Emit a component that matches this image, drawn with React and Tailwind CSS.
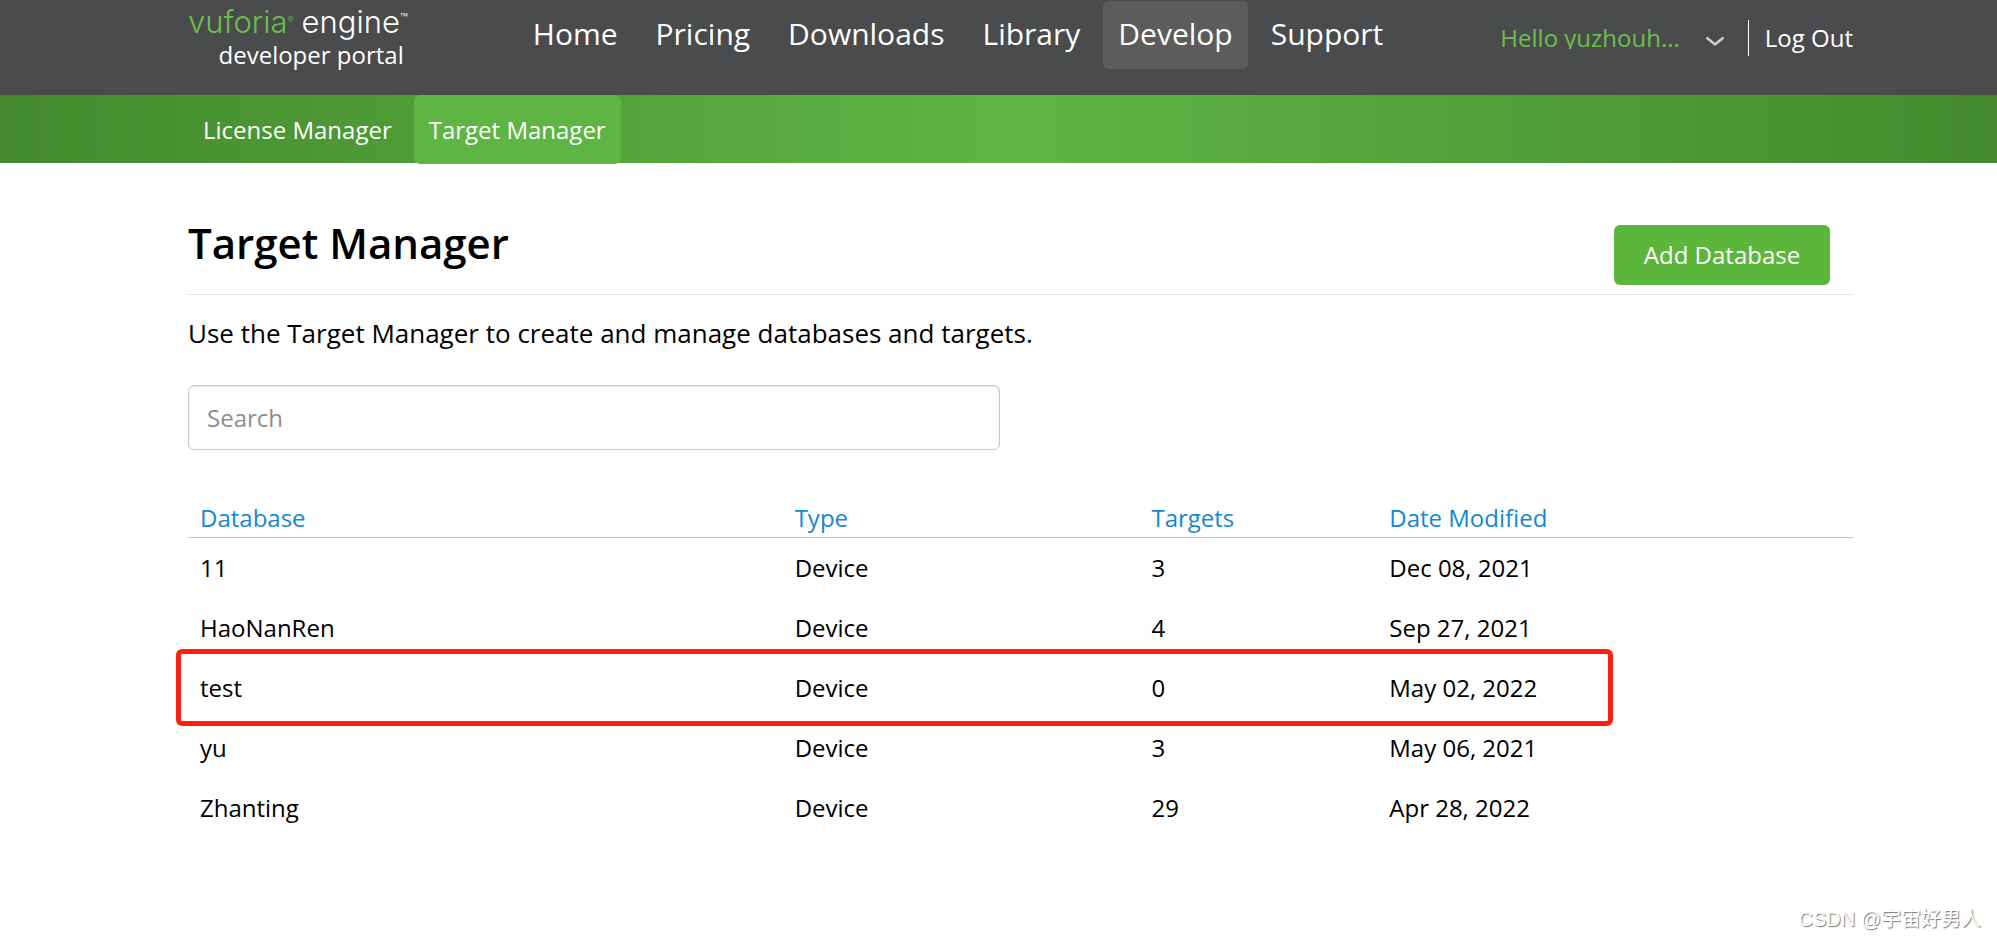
import React from "react";

const navItems = ["Home", "Pricing", "Downloads", "Library", "Develop", "Support"];

const databases = [
  { name: "11", type: "Device", targets: 3, modified: "Dec 08, 2021" },
  { name: "HaoNanRen", type: "Device", targets: 4, modified: "Sep 27, 2021" },
  { name: "test", type: "Device", targets: 0, modified: "May 02, 2022", marked: true },
  { name: "yu", type: "Device", targets: 3, modified: "May 06, 2021" },
  { name: "Zhanting", type: "Device", targets: 29, modified: "Apr 28, 2022" },
];

const Logo = () => (
  <a href="#" className="flex flex-col items-end pt-1">
    <span className="flex items-start font-['Inter',sans-serif] text-[31px] leading-9 font-light">
      <span className="text-[#6cc04a]">vuforia</span>
      <span className="text-[9px] leading-8 text-[#6cc04a]">®</span>
      <span className="ml-2">engine</span>
      <span className="text-[13px] leading-7">™</span>
    </span>
    <span className="pr-1 text-2xl leading-[30px]">developer portal</span>
  </a>
);

const Header = () => (
  <header className="h-[95px] bg-[#4a4b4d] pl-[188px] pr-36 text-white flex items-start justify-between">
    <Logo />
    <nav className="flex gap-2 pt-px pl-2 text-[30px] leading-[66px]">
      {navItems.map(item => (
        <a
          key={item}
          href="#"
          className={item === "Develop" ? "px-[15px] pb-0.5 rounded-md bg-[#5c5c5c]" : "px-[15px]"}
        >
          {item}
        </a>
      ))}
    </nav>
    <div className="flex items-start pt-5 text-2xl">
      <button type="button" className="flex items-end text-[#6cc04a] cursor-pointer">
        <span className="h-[29px] overflow-hidden leading-9">Hello yuzhouh...</span>
        <svg className="ml-[25px] mb-0.5 h-3 w-5" viewBox="0 0 20 12" fill="none" stroke="#cfcfcf" strokeWidth="2.400">
          <path d="M1.500 2.500L10 9.500L18.500 2.500" />
        </svg>
      </button>
      <a href="#" className="ml-[23px] border-l border-white pl-4 leading-9">Log Out</a>
    </div>
  </header>
);

const SubNav = () => (
  <nav className="h-[68px] pl-[188px] flex items-start gap-[7px] bg-linear-[90deg,#448a2d,#5fb544_51%,#448a2d] text-2xl leading-[69px] text-white">
    <a href="#" className="px-[15px]">License Manager</a>
    <a href="#" className="px-[15px] rounded-md bg-[#5fb544]">Target Manager</a>
  </nav>
);

const DatabaseTable = () => (
  <table className="mt-[49px] w-full table-fixed text-left text-2xl">
    <thead>
      <tr className="h-[38px] border-b border-[#c4c4c4] text-[#1489cf]">
        <th className="w-5/14 px-3 font-normal">Database</th>
        <th className="w-3/14 px-3 font-normal">Type</th>
        <th className="w-2/14 px-3 font-normal">Targets</th>
        <th className="w-4/14 px-3 font-normal">Date Modified</th>
      </tr>
    </thead>
    <tbody>
      {databases.map(db => (
        <tr key={db.name} className="relative h-15">
          <td className="px-3 pt-0.5">
            {db.name}
            {db.marked && (
              <span className="absolute -left-3 right-60 -top-2 -bottom-[9px] rounded-md border-5 border-[#ff1f10] pointer-events-none"></span>
            )}
          </td>
          <td className="px-3 pt-0.5">{db.type}</td>
          <td className="px-3 pt-0.5">{db.targets}</td>
          <td className="px-3 pt-0.5">{db.modified}</td>
        </tr>
      ))}
    </tbody>
  </table>
);

const App = () => (
  <div className="relative min-h-screen bg-white font-['Open_Sans',sans-serif] text-black">
    <Header />
    <SubNav />
    <main className="pl-[188px] pr-36 pt-[50px]">
      <div className="flex items-end justify-between border-b border-[#e3e3e3] pb-[9px] pr-[23px]">
        <h1 className="pb-3 text-[42px] leading-[60px] font-semibold">Target Manager</h1>
        <button type="button" className="h-15 w-[216px] rounded-md bg-[#5cb63c] text-2xl text-white cursor-pointer">
          Add Database
        </button>
      </div>
      <p className="mt-[18px] text-[26px] leading-10">Use the Target Manager to create and manage databases and targets.</p>
      <input
        type="text"
        aria-label="Search"
        placeholder="Search"
        className="mt-8 block h-[65px] w-[812px] max-w-full rounded-md border border-[#c8c8c8] px-[18px] text-2xl placeholder-[#8e8e8e] shadow-[inset_0_1px_2px_rgba(0,0,0,0.1)]"
      />
      <DatabaseTable />
    </main>
    <div className="absolute bottom-1.5 right-4 font-['Liberation_Sans','Noto_Sans_CJK_SC',sans-serif] text-xl text-white [text-shadow:1px_1px_1px_#777]">
      CSDN @宇宙好男人
    </div>
  </div>
);

export default App;
